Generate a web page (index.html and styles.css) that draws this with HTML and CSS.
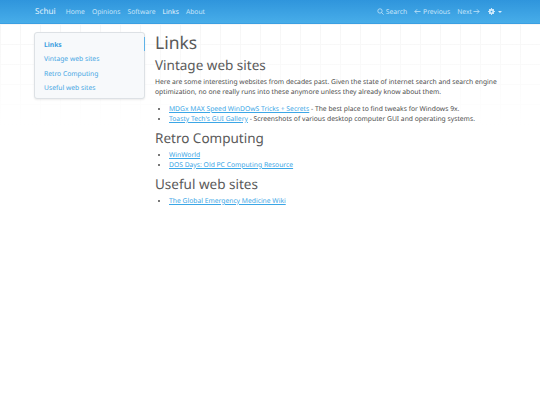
FILE: index.html
```html
<!DOCTYPE html>
<html>
<head>
  <title>Links</title>
  <link rel="stylesheet" href="styles.css">
</head>
<body>

<nav class="navbar">
  <a class="brand" href="#">Schui</a>
  <a class="nav-link" href="#">Home</a>
  <a class="nav-link" href="#">Opinions</a>
  <a class="nav-link" href="#">Software</a>
  <a class="nav-link active" href="#">Links</a>
  <a class="nav-link" href="#">About</a>
  <div class="nav-right">
    <a class="nav-link" href="#">
      <svg class="icon" viewBox="0 0 16 16"><circle cx="6.8" cy="6.8" r="5"/><path d="M10.5 10.5 15 15"/></svg>Search
    </a>
    <a class="nav-link" href="#">
      <svg class="icon" viewBox="0 0 16 16"><path d="M15 8H2M7 3 2 8l5 5"/></svg>Previous
    </a>
    <a class="nav-link" href="#">
      Next<svg class="icon icon-after" viewBox="0 0 16 16"><path d="M1 8h13M9 3l5 5-5 5"/></svg>
    </a>
    <a class="nav-link theme" href="#">
      <svg class="gear" viewBox="0 0 16 16"><circle cx="8" cy="8" r="5.4"/><path d="M8 0v16M0 8h16M2.3 2.3l11.4 11.4M13.7 2.3 2.3 13.7"/><circle class="hole" cx="8" cy="8" r="2"/></svg>
      <span class="caret"></span>
    </a>
  </div>
</nav>

<div class="layout">
  <aside class="toc">
    <a class="toc-link active" href="#">Links</a>
    <a class="toc-link" href="#">Vintage web sites</a>
    <a class="toc-link" href="#">Retro Computing</a>
    <a class="toc-link" href="#">Useful web sites</a>
  </aside>

  <main class="content">
    <h1>Links</h1>

    <h2>Vintage web sites</h2>
    <p>Here are some interesting websites from decades past. Given the state of internet search and search engine optimization, no one really runs into these anymore unless they already know about them.</p>
    <ul>
      <li><a href="#">MDGx MAX Speed WinDOwS Tricks + Secrets</a> - The best place to find tweaks for Windows 9x.</li>
      <li><a href="#">Toasty Tech's GUI Gallery</a> - Screenshots of various desktop computer GUI and operating systems.</li>
    </ul>

    <h2>Retro Computing</h2>
    <ul>
      <li><a href="#">WinWorld</a></li>
      <li><a href="#">DOS Days: Old PC Computing Resource</a></li>
    </ul>

    <h2>Useful web sites</h2>
    <ul>
      <li><a href="#">The Global Emergency Medicine Wiki</a></li>
    </ul>
  </main>
</div>

</body>
</html>
```

FILE: styles.css
```css
* {
  box-sizing: border-box;
}

html, body {
  height: 100%;
}

body {
  margin: 0;
  font-family: "Noto Sans", sans-serif;
  font-size: 6.75px;
  line-height: 10px;
  text-rendering: geometricPrecision;
  color: #4c4c4c;
  background-color: #fff;
  background-image:
    linear-gradient(rgba(255, 255, 255, 0) 24px, #fff 125px),
    linear-gradient(#f6f6f6 1px, transparent 1px),
    linear-gradient(90deg, #f6f6f6 1px, transparent 1px);
  background-size: 100% 100%, 20px 20px, 20px 20px;
  background-position: 0 0, 0 24px, 0 0;
}

a {
  color: #3ba6e6;
}

.navbar {
  height: 24px;
  padding: 0 38px 0 35px;
  display: flex;
  align-items: center;
  background: linear-gradient(#2f95dc, #47ade9);
  border-bottom: 1px solid #3a9fe2;
}

.brand {
  font-size: 8.2px;
  color: #e3f2fc;
  text-decoration: none;
  margin-right: 10px;
}

.nav-link {
  color: #c8e5f9;
  text-decoration: none;
  margin-right: 7px;
  display: flex;
  align-items: center;
}

.nav-link.active {
  color: #eef7fd;
}

.nav-right {
  margin-left: auto;
  display: flex;
  align-items: center;
}

.icon {
  width: 7px;
  height: 7px;
  margin-right: 2px;
  fill: none;
  stroke: #d5ecfb;
  stroke-width: 1.6;
}

.icon-after {
  margin: 0 0 0 1px;
}

.gear {
  width: 7px;
  height: 7px;
  margin-left: 1px;
  fill: #d5ecfb;
  stroke: #d5ecfb;
  stroke-width: 2;
}

.gear .hole {
  fill: #3a9fe2;
  stroke: none;
}

.caret {
  width: 0;
  height: 0;
  margin-left: 3px;
  border-top: 2px solid #d5ecfb;
  border-left: 2px solid transparent;
  border-right: 2px solid transparent;
}

.theme {
  margin-right: 0;
}

.layout {
  display: flex;
  align-items: flex-start;
  padding: 8px 34px 0;
}

.toc {
  width: 111px;
  height: 67px;
  flex: none;
  margin-right: 10px;
  padding: 5px 9px;
  background: #f7f9fb;
  border: 1px solid #dde1e5;
  border-radius: 3px;
  box-shadow: 0 1px 2px rgba(0, 0, 0, 0.08);
  position: relative;
}

.toc::after {
  content: "";
  position: absolute;
  right: -1px;
  top: 4px;
  width: 1px;
  height: 14px;
  background: #5fb3e8;
}

.toc-link {
  display: block;
  height: 14.3px;
  line-height: 14.3px;
  color: #45a5e3;
  text-decoration: none;
}

.toc-link.active {
  font-weight: 700;
  color: #3d9fe0;
}

.content {
  flex: 1;
  min-width: 0;
}

h1 {
  margin: 0 0 2px;
  font-size: 17.5px;
  line-height: 22px;
  font-weight: 400;
  color: #5a5a5a;
}

h2 {
  margin: 0 0 3px;
  font-size: 13.5px;
  line-height: 18px;
  font-weight: 400;
  color: #5a5a5a;
}

p {
  margin: 0 0 7px;
}

ul {
  margin: 0 0 5px;
  padding-left: 14px;
}

h2 + ul {
  margin-top: 1px;
}
```
